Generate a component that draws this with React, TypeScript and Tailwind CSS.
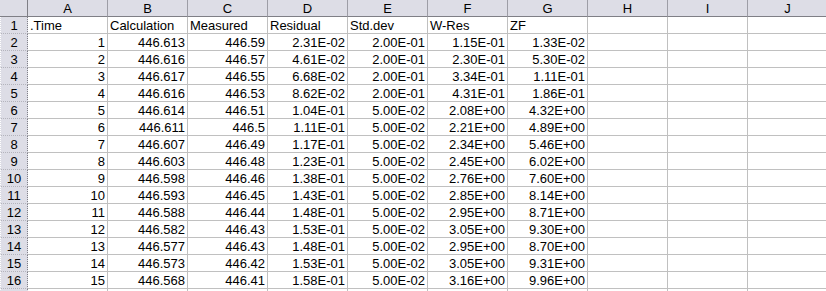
const columns = ["A", "B", "C", "D", "E", "F", "G", "H", "I", "J"];

const headers = [".Time", "Calculation", "Measured", "Residual", "Std.dev", "W-Res", "ZF"];

const data = [
  ["1", "446.613", "446.59", "2.31E-02", "2.00E-01", "1.15E-01", "1.33E-02"],
  ["2", "446.616", "446.57", "4.61E-02", "2.00E-01", "2.30E-01", "5.30E-02"],
  ["3", "446.617", "446.55", "6.68E-02", "2.00E-01", "3.34E-01", "1.11E-01"],
  ["4", "446.616", "446.53", "8.62E-02", "2.00E-01", "4.31E-01", "1.86E-01"],
  ["5", "446.614", "446.51", "1.04E-01", "5.00E-02", "2.08E+00", "4.32E+00"],
  ["6", "446.611", "446.5", "1.11E-01", "5.00E-02", "2.21E+00", "4.89E+00"],
  ["7", "446.607", "446.49", "1.17E-01", "5.00E-02", "2.34E+00", "5.46E+00"],
  ["8", "446.603", "446.48", "1.23E-01", "5.00E-02", "2.45E+00", "6.02E+00"],
  ["9", "446.598", "446.46", "1.38E-01", "5.00E-02", "2.76E+00", "7.60E+00"],
  ["10", "446.593", "446.45", "1.43E-01", "5.00E-02", "2.85E+00", "8.14E+00"],
  ["11", "446.588", "446.44", "1.48E-01", "5.00E-02", "2.95E+00", "8.71E+00"],
  ["12", "446.582", "446.43", "1.53E-01", "5.00E-02", "3.05E+00", "9.30E+00"],
  ["13", "446.577", "446.43", "1.48E-01", "5.00E-02", "2.95E+00", "8.70E+00"],
  ["14", "446.573", "446.42", "1.53E-01", "5.00E-02", "3.05E+00", "9.31E+00"],
  ["15", "446.568", "446.41", "1.58E-01", "5.00E-02", "3.16E+00", "9.96E+00"],
];

const RowHead = ({ n }: { n?: number }) => (
  <div className="h-[17px] bg-[#dddde6] border-b border-b-[#b4b4bc] border-r border-r-[#7f7f86] border-l border-l-white border-dotted flex items-center justify-center leading-none">
    {n}
  </div>
);

const Cell = ({ text, right }: { text?: string; right?: boolean }) => (
  <div
    className={
      "h-[17px] bg-white border-b border-r border-[#c0c0c0] flex items-center px-[2px] leading-none whitespace-nowrap overflow-hidden " +
      (right ? "justify-end" : "justify-start")
    }
  >
    {text}
  </div>
);

export default function App() {
  return (
    <div
      className="w-[826px] h-[291px] overflow-hidden bg-white text-[13px] text-black"
      style={{ fontFamily: '"Liberation Sans", Arial, sans-serif' }}
    >
      <div className="grid grid-cols-[28px_repeat(10,80px)] w-[828px]">
        <div className="h-[17px] bg-[#dddde6] border-b border-r border-[#7f7f86]" />
        {columns.map((c) => (
          <div
            key={c}
            className="h-[17px] bg-[#dddde6] border-b border-b-[#7f7f86] border-r border-r-[#9d9da6] flex items-center justify-center leading-none"
          >
            {c}
          </div>
        ))}

        <RowHead n={1} />
        {columns.map((c, i) => (
          <Cell key={c} text={headers[i]} />
        ))}

        {data.map((row, r) => (
          <div key={r} className="contents">
            <RowHead n={r + 2} />
            {columns.map((c, i) => (
              <Cell key={c} text={row[i]} right />
            ))}
          </div>
        ))}

        {/* row 17, only its top edge shows */}
        <RowHead />
        {columns.map((c) => (
          <Cell key={c} />
        ))}
      </div>
    </div>
  );
}
